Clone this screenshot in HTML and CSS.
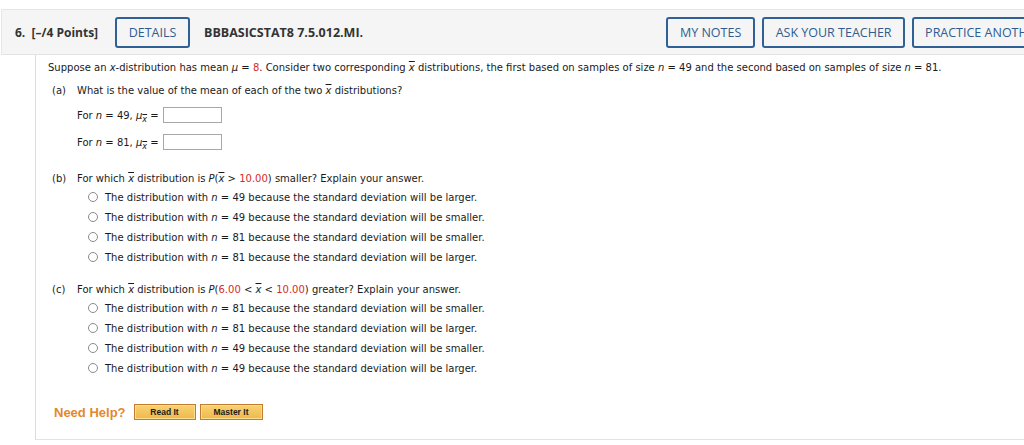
FILE: index.html
```html
<!DOCTYPE html>
<html>
<head>
<meta charset="utf-8">
<link rel="stylesheet" href="styles.css">
</head>
<body>
<div class="question">
  <div class="qhead">
    <span class="qnum">6.&nbsp; [–/4 Points]</span>
    <span class="btn btn-details">DETAILS</span>
    <span class="qcode">BBBASICSTAT8 7.5.012.MI.</span>
    <span class="spacer"></span>
    <span class="btn btn-notes">MY NOTES</span>
    <span class="btn btn-ask">ASK YOUR TEACHER</span>
    <span class="btn btn-practice">PRACTICE ANOTHER</span>
  </div>
  <div class="qbody">
    <p class="intro">Suppose an <i>x</i>-distribution has mean <i>μ</i> = <span class="red">8</span>. Consider two corresponding <i class="bar">x</i> distributions, the first based on samples of size <i>n</i> = 49 and the second based on samples of size <i>n</i> = 81.</p>

    <div class="part part-a">
      <div class="plabel">(a)</div>
      <div class="pcontent">
        <p class="ptitle">What is the value of the mean of each of the two <i class="bar">x</i> distributions?</p>
        <div class="fill"><span>For <i>n</i> = 49, <i>μ</i><sub><i class="bar">x</i></sub> =</span><span class="box"></span></div>
        <div class="fill fill2"><span>For <i>n</i> = 81, <i>μ</i><sub><i class="bar">x</i></sub> =</span><span class="box"></span></div>
      </div>
    </div>

    <div class="part part-b">
      <div class="plabel">(b)</div>
      <div class="pcontent">
        <p class="ptitle">For which <i class="bar">x</i> distribution is <i>P</i>(<i class="bar">x</i> &gt; <span class="red">10.00</span>) smaller? Explain your answer.</p>
        <ul class="opts">
          <li><span class="radio"></span><span>The distribution with <i>n</i> = 49 because the standard deviation will be larger.</span></li>
          <li><span class="radio"></span><span>The distribution with <i>n</i> = 49 because the standard deviation will be smaller.</span></li>
          <li><span class="radio"></span><span>The distribution with <i>n</i> = 81 because the standard deviation will be smaller.</span></li>
          <li><span class="radio"></span><span>The distribution with <i>n</i> = 81 because the standard deviation will be larger.</span></li>
        </ul>
      </div>
    </div>

    <div class="part part-c">
      <div class="plabel">(c)</div>
      <div class="pcontent">
        <p class="ptitle">For which <i class="bar">x</i> distribution is <i>P</i>(<span class="red">6.00</span> &lt; <i class="bar">x</i> &lt; <span class="red">10.00</span>) greater? Explain your answer.</p>
        <ul class="opts">
          <li><span class="radio"></span><span>The distribution with <i>n</i> = 81 because the standard deviation will be smaller.</span></li>
          <li><span class="radio"></span><span>The distribution with <i>n</i> = 81 because the standard deviation will be larger.</span></li>
          <li><span class="radio"></span><span>The distribution with <i>n</i> = 49 because the standard deviation will be smaller.</span></li>
          <li><span class="radio"></span><span>The distribution with <i>n</i> = 49 because the standard deviation will be larger.</span></li>
        </ul>
      </div>
    </div>

    <div class="help">
      <span class="help-label">Need Help?</span>
      <span class="hbtn hbtn-read">Read It</span>
      <span class="hbtn hbtn-master">Master It</span>
    </div>
  </div>
</div>
</body>
</html>
```

FILE: styles.css
```css
html, body {
  margin: 0;
  padding: 0;
  background: #ffffff;
  overflow: hidden;
}
body {
  padding-top: 9px;
  width: 1100px;
}
.question {
  margin-left: 1px;
}
.qhead {
  display: flex;
  align-items: center;
  height: 44px;
  background: #f5f5f5;
  border-top: 1px solid #e6e6e6;
  border-bottom: 1px solid #e3e3e3;
  border-left: 1px solid #e6e6e6;
  font-family: "Open Sans", "Liberation Sans", sans-serif;
  font-size: 12px;
  color: #333333;
  padding-left: 13px;
  white-space: nowrap;
}
.qhead > span {
  flex-shrink: 0;
}
.qnum {
  font-weight: 700;
  width: 100px;
}
.btn {
  box-sizing: border-box;
  height: 31px;
  border: 2px solid #2f6196;
  border-radius: 3px;
  color: #2d5d92;
  font-size: 12.5px;
  display: inline-flex;
  align-items: center;
  justify-content: center;
  padding: 0 10px;
  background: #f5f5f5;
}
.btn-details { width: 75px; }
.qcode {
  font-weight: 700;
  font-size: 12.5px;
  margin-left: 14px;
  color: #333;
}
.spacer {
  width: 303px;
}
.btn-notes { width: 89px; }
.btn-ask { width: 143px; margin-left: 7px; }
.btn-practice { width: 160px; margin-left: 7px; justify-content: flex-start; padding-left: 11px; }

.qbody {
  margin-left: 34px;
  border-left: 1px solid #dcdcdc;
  border-bottom: 1px solid #e3e3e3;
  height: 385px;
  padding-left: 12px;
  font-family: "DejaVu Sans", Verdana, sans-serif;
  font-size: 10px;
  color: #1a1a1a;
  box-sizing: border-box;
}
p { margin: 0; }
.intro {
  padding-top: 6px;
  line-height: 13px;
}
.red { color: #d62b1f; }
i.bar {
  text-decoration: overline;
}
.part {
  display: flex;
  margin-left: 4px;
  line-height: 13px;
}
.plabel {
  width: 25px;
}
.part-a { margin-top: 10px; }
.fill {
  margin-top: 10px;
  height: 16px;
  display: flex;
  align-items: center;
  white-space: pre;
}
.fill2 { margin-top: 11px; }
sub {
  font-size: 8px;
  vertical-align: -3px;
  line-height: 0;
}
.box {
  display: inline-block;
  width: 57px;
  height: 14px;
  border: 1px solid #a8a8a8;
  margin-left: 4px;
  background: #fff;
}
.part-b { margin-top: 22px; }
.part-c { margin-top: 16px; }
.opts {
  list-style: none;
  margin: 0;
  padding: 2px 0 0 11px;
}
.opts li {
  display: flex;
  align-items: center;
  height: 20px;
  white-space: pre;
}
.radio {
  display: inline-block;
  box-sizing: border-box;
  width: 10px;
  height: 10px;
  border: 1px solid #8a8a8a;
  border-radius: 50%;
  margin-right: 7px;
  background: #fff;
}
.help {
  display: flex;
  align-items: center;
  margin-top: 26px;
  margin-left: 6px;
}
.help-label {
  font-family: "Liberation Sans", Arial, sans-serif;
  font-weight: 700;
  font-size: 13px;
  color: #e3882c;
  margin-right: 8px;
}
.hbtn {
  box-sizing: border-box;
  height: 16px;
  border: 1px solid #c57a2e;
  background: linear-gradient(#f8d273, #f0b94a);
  box-shadow: inset 0 0 0 1px #f9dd92;
  font-family: "Liberation Sans", Arial, sans-serif;
  font-weight: 700;
  font-size: 8.5px;
  color: #1b1b1b;
  display: inline-flex;
  align-items: center;
  justify-content: center;
}
.hbtn-read { width: 62px; }
.hbtn-master { width: 63px; margin-left: 4px; }
```
